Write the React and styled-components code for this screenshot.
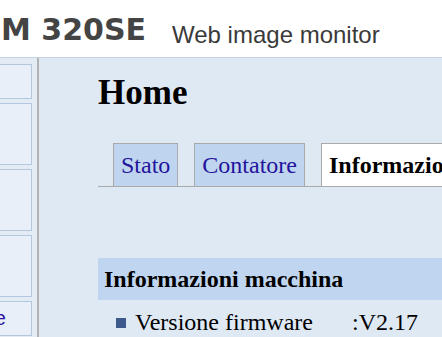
import React from "react";
import styled, { createGlobalStyle } from "styled-components";

// the page is scrolled sideways in the screenshot; SHIFT hides the left part
const SHIFT = 130;

const GlobalStyle = createGlobalStyle`
    html, body {
        margin: 0;
        padding: 0;
        overflow: hidden;
        background: #dfe9f4;
    }
`;

const Page = styled.div`
    margin-left: -${SHIFT}px;
    width: 760px;
    min-height: 100vh;
    display: flex;
    flex-direction: column;
    background: #dfe9f4;
`;

const Header = styled.div`
    height: 57px;
    display: flex;
    align-items: flex-start;
    background: #ffffff;
    border-bottom: 1px solid #c3d2e5;
`;

const Logo = styled.div`
    width: ${SHIFT + 1}px;
    flex-shrink: 0;
`;

const ModelName = styled.div`
    margin-top: 15px;
    font-family: "DejaVu Sans", "Liberation Sans", sans-serif;
    font-weight: bold;
    font-size: 30px;
    line-height: 30px;
    color: #444444;
    white-space: nowrap;
`;

const Subtitle = styled.div`
    margin-top: 23px;
    margin-left: 26px;
    font-family: "Liberation Sans", Arial, sans-serif;
    font-size: 24px;
    line-height: 24px;
    color: #3a3a3a;
    white-space: nowrap;
`;

const Body = styled.div`
    flex: 1;
    display: flex;
`;

const Sidebar = styled.div`
    width: ${SHIFT + 39}px;
    flex-shrink: 0;
    box-sizing: border-box;
    padding: 6px 5px 0 8px;
    display: flex;
    flex-direction: column;
    gap: 4px;
    background: #e3ebf5;
    border-right: 2px solid #b3b3b3;
`;

const MenuBox = styled.div`
    height: ${({ tall }) => (tall ? 60 : 33)}px;
    flex-shrink: 0;
    display: flex;
    align-items: center;
    justify-content: ${({ end }) => (end ? "flex-end" : "flex-start")};
    padding: 0 ${({ end }) => (end ? "25px" : "8px")} 0 8px;
    background: #e9eff8;
    border: 1px solid #b5c7de;
    font-family: "Liberation Sans", Arial, sans-serif;
    font-size: 20px;
    line-height: 33px;
    color: #2a14a0;
`;

const Main = styled.div`
    flex: 1;
    padding: 17px 20px 0 59px;
    font-family: "Liberation Serif", "Times New Roman", serif;
    color: #000000;
`;

const Title = styled.h1`
    margin: 0;
    font-size: 35px;
    line-height: 35px;
    font-weight: bold;
`;

const TabBar = styled.div`
    margin-top: 33px;
    padding-left: 15px;
    display: flex;
    gap: 16px;
    border-bottom: 1px solid #aaaaaa;
`;

const Tab = styled.div`
    height: 40px;
    padding: 1px 7px 1px;
    margin-bottom: ${({ active }) => (active ? "-1px" : "0")};
    border: 1px solid #aaaaaa;
    border-bottom: none;
    background: ${({ active }) => (active ? "#ffffff" : "#bfd5ef")};
    color: ${({ active }) => (active ? "#000000" : "#24139c")};
    font-weight: ${({ active }) => (active ? "bold" : "normal")};
    font-size: 24px;
    line-height: 40px;
    white-space: nowrap;
`;

const SectionBar = styled.div`
    margin-top: 71px;
    height: 42px;
    padding-left: 6px;
    background: #c0d6f0;
    font-size: 24px;
    font-weight: bold;
    line-height: 42px;
`;

const InfoRow = styled.div`
    margin-top: 9px;
    padding-left: 18px;
    display: grid;
    grid-template-columns: 19px 217px auto;
    align-items: center;
    font-size: 24px;
    line-height: 26px;
`;

const Bullet = styled.span`
    width: 10px;
    height: 10px;
    margin-top: 2px;
    background: #3e5a8c;
`;

const menu = [
    { label: "Stato", tall: false },
    { label: "Lavoro", tall: true },
    { label: "Rubrica", tall: true },
    { label: "Config.", tall: true },
    { label: "Home", tall: false, end: true },
    { label: "Lingua", tall: false },
];

const App = () => {
    return (
        <>
            <GlobalStyle />
            <Page>
                <Header>
                    <Logo />
                    <ModelName>M 320SE</ModelName>
                    <Subtitle>Web image monitor</Subtitle>
                </Header>
                <Body>
                    <Sidebar>
                        {menu.map((item) => (
                            <MenuBox key={item.label} tall={item.tall} end={item.end}>
                                {item.end ? item.label : ""}
                            </MenuBox>
                        ))}
                    </Sidebar>
                    <Main>
                        <Title>Home</Title>
                        <TabBar>
                            <Tab>Stato</Tab>
                            <Tab>Contatore</Tab>
                            <Tab active>Informazioni</Tab>
                        </TabBar>
                        <SectionBar>Informazioni macchina</SectionBar>
                        <InfoRow>
                            <Bullet />
                            <span>Versione firmware</span>
                            <span>:V2.17</span>
                        </InfoRow>
                    </Main>
                </Body>
            </Page>
        </>
    );
};

export default App;
